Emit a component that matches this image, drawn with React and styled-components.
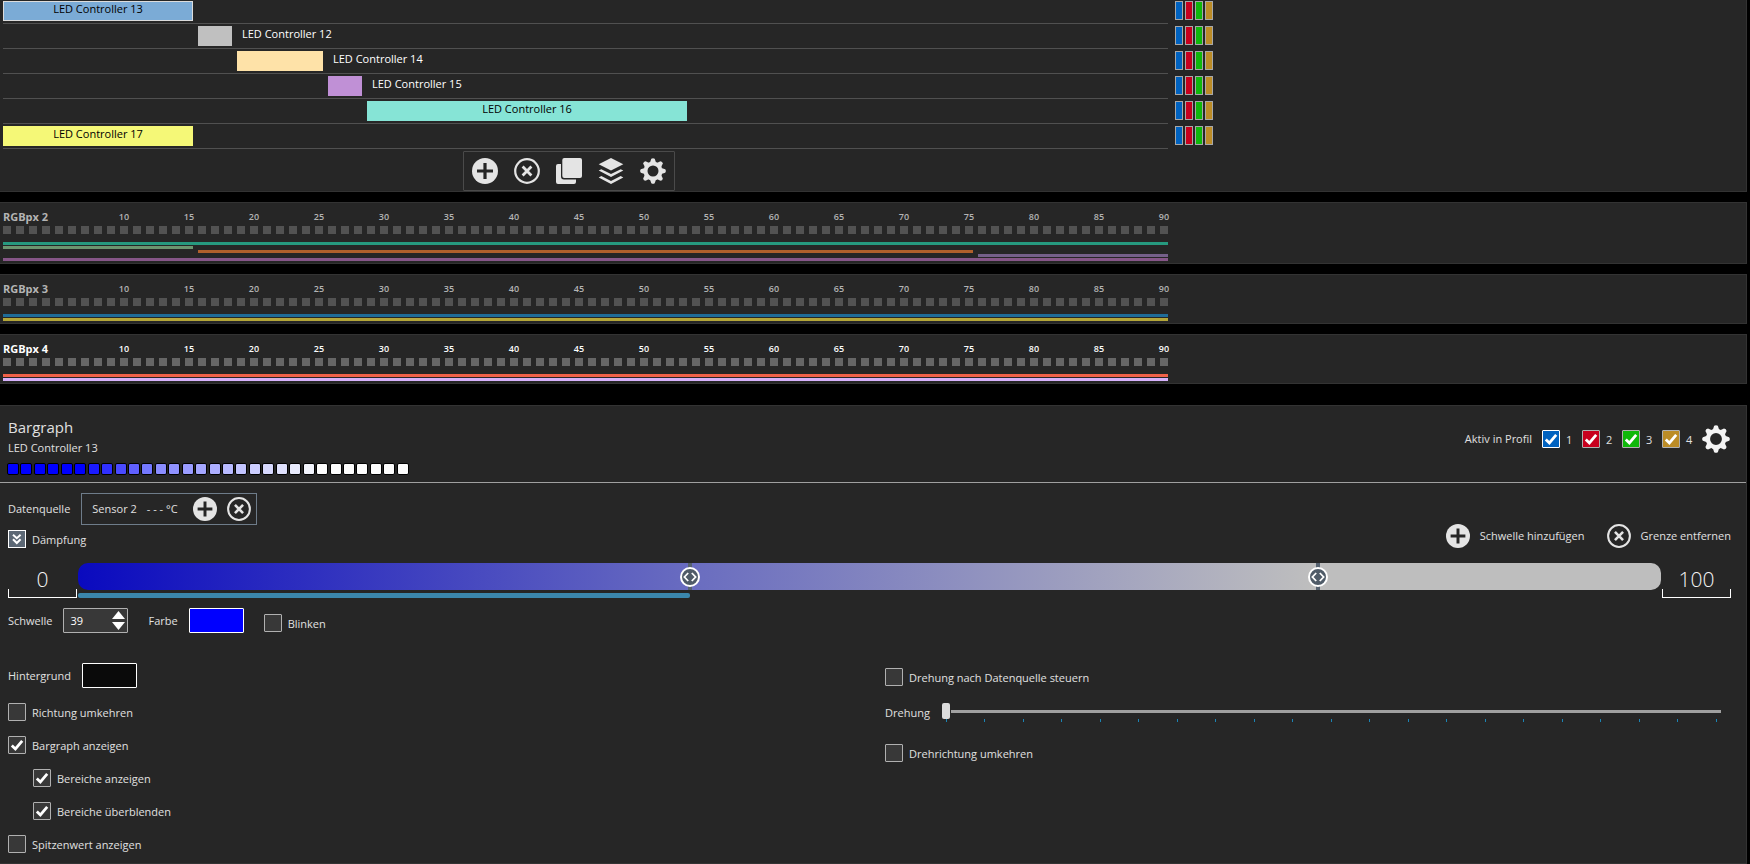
import React, { useState } from 'react';
import styled, { createGlobalStyle, css } from 'styled-components';

const PROFILES = ['#0062c0', '#c8001e', '#0fb80a', '#bc8c26'];

const CONTROLLERS = [
    { name: 'LED Controller 13', start: 1, count: 15, color: '#7babd6', selected: true },
    { name: 'LED Controller 12', start: 16, count: 3, color: '#c0c0c0', outside: true },
    { name: 'LED Controller 14', start: 19, count: 7, color: '#fee2a8', outside: true },
    { name: 'LED Controller 15', start: 26, count: 3, color: '#c090d6', outside: true },
    { name: 'LED Controller 16', start: 29, count: 25, color: '#86e4d6' },
    { name: 'LED Controller 17', start: 1, count: 15, color: '#f5f877' },
];

const STRIPS = [
    {
        name: 'RGBpx 2',
        lanes: [
            { start: 1, count: 90, color: '#26997f' },
            { start: 1, count: 15, color: '#6c9670' },
            { start: 16, count: 60, color: '#b0602c' },
            { start: 76, count: 15, color: '#75608a' },
            { start: 1, count: 90, color: '#865688' },
        ],
    },
    {
        name: 'RGBpx 3',
        lanes: [
            { start: 1, count: 90, color: '#1f6c98' },
            { start: 1, count: 90, color: '#b4a638' },
        ],
    },
    {
        name: 'RGBpx 4',
        active: true,
        lanes: [
            { start: 1, count: 90, color: '#f0624a' },
            { start: 1, count: 90, color: '#d6b2fc' },
        ],
    },
];

const PREVIEW = [
    '#0000ff', '#0000ff', '#0000ff', '#0000ff', '#0000ff', '#0000ff', '#1a1aff', '#3030ff', '#4a4aff', '#6060ff',
    '#7478ff', '#8a8cff', '#9092ff', '#9a9cff', '#a4a6ff', '#acaeff', '#b8baff', '#c2c4ff', '#ccceff', '#d6d8fd',
    '#dee0fc', '#e8eafc', '#f2f4fc', '#fcfcfc', '#fcfcfc', '#fcfcfc', '#fcfcfc', '#fcfcfc', '#fcfcfc', '#fcfcfc',
];

const range = (n) => Array.from({ length: n }, (_, i) => i);

const AddIcon = ({ size }) => (
    <svg width={size} height={size} viewBox="0 0 26 26">
        <circle cx="13" cy="13" r="13" fill="#e4e4e4" />
        <path d="M13 5v16M5 13h16" stroke="#262626" strokeWidth="3.2" />
    </svg>
);

const RemoveIcon = ({ size }) => (
    <svg width={size} height={size} viewBox="0 0 26 26" fill="none" stroke="#e4e4e4">
        <circle cx="13" cy="13" r="11.8" strokeWidth="2.2" />
        <path d="M8.6 8.6l8.8 8.8M17.4 8.6l-8.8 8.8" strokeWidth="2.8" />
    </svg>
);

const CopyIcon = () => (
    <svg width="26" height="26" viewBox="0 0 26 26" fill="#e4e4e4">
        <path d="M2 6h3v12.5a3 3 0 0 0 3 3h12V24a2 2 0 0 1-2 2H2a2 2 0 0 1-2-2V8a2 2 0 0 1 2-2z" />
        <rect x="6.3" y="0" width="19.7" height="20" rx="2" />
    </svg>
);

const LayersIcon = () => (
    <svg width="26" height="26" viewBox="0 0 26 26" fill="#e4e4e4">
        <path d="M13 0l12.3 6.2L13 12.4.7 6.2z" />
        <path d="M.7 12.6l2.6-1.3 9.7 4.8 9.7-4.8 2.6 1.3L13 19z" />
        <path d="M.7 19.4l2.6-1.3 9.7 4.9 9.7-4.9 2.6 1.3L13 26z" />
    </svg>
);

const GearIcon = ({ size, color = '#e4e4e4' }) => (
    <svg width={size} height={size} viewBox="0 0 26 26" fill={color}>
        <circle cx="13" cy="13" r="7.5" fill="none" stroke={color} strokeWidth="4" />
        {range(8).map((i) => (
            <path key={i} d="M10 4.6L11.3.8Q13-.5 14.7.8L16 4.6z" transform={`rotate(${i * 45} 13 13)`} />
        ))}
    </svg>
);

const Check = ({ label, color, strong, defaultChecked }) => (
    <CheckLabel>
        <CheckBox>
            <CheckInput type="checkbox" defaultChecked={defaultChecked} $color={color} $strong={strong} />
            <svg width="18" height="18" viewBox="0 0 18 18" fill="none" stroke="#fff" strokeWidth="2.8">
                <path d="M3.8 9.4l3.6 3.5 6.8-8" />
            </svg>
        </CheckBox>
        {label}
    </CheckLabel>
);

const ControllerRow = ({ data }) => {
    const { name, start, count, color, selected, outside } = data;

    return (
        <Row>
            <Track>
                <Bar $start={start} $count={count} $color={color} $selected={selected}>
                    {!outside && name}
                </Bar>
                {outside && <BarLabel $start={start + count}>{name}</BarLabel>}
            </Track>
            <Swatches>
                {PROFILES.map((profile) => <Swatch key={profile} $color={profile} />)}
            </Swatches>
        </Row>
    );
};

const Strip = ({ data }) => {
    const { name, active, lanes } = data;

    return (
        <StripPanel $active={active}>
            <Scale>
                <StripName>{name}</StripName>
                {range(17).map((i) => (
                    <ScaleMark key={i} $slot={(i + 2) * 5}>{(i + 2) * 5}</ScaleMark>
                ))}
            </Scale>
            <Slots>
                {range(90).map((i) => <Led key={i} $active={active} />)}
            </Slots>
            <Lanes>
                {lanes.map((lane, i) => (
                    <Lane key={i} $row={i + 1} $start={lane.start} $count={lane.count} $color={lane.color} />
                ))}
            </Lanes>
        </StripPanel>
    );
};

const Handle = ({ value, label }) => (
    <Marker style={{ left: `calc((100% - 14px) * ${value / 100})` }}>
        <Knob type="button" aria-label={label}>
            <svg width="20" height="20" viewBox="0 0 20 20" fill="none" stroke="#fff">
                <circle cx="10" cy="10" r="9" fill="#4f5b68" strokeWidth="2" />
                <path d="M8.2 6L4.4 10l3.8 4M11.8 6l3.8 4-3.8 4" strokeWidth="1.8" />
            </svg>
        </Knob>
    </Marker>
);

const App = () => {
    const [threshold, setThreshold] = useState(39);

    return (
        <Page>
            <GlobalStyle />
            <TopPanel>
                {CONTROLLERS.map((data) => <ControllerRow key={data.name} data={data} />)}
                <Toolbar>
                    <IconButton type="button" aria-label="Hinzufügen"><AddIcon size={26} /></IconButton>
                    <IconButton type="button" aria-label="Entfernen"><RemoveIcon size={26} /></IconButton>
                    <IconButton type="button" aria-label="Kopieren"><CopyIcon /></IconButton>
                    <IconButton type="button" aria-label="Ebenen"><LayersIcon /></IconButton>
                    <IconButton type="button" aria-label="Einstellungen"><GearIcon size={26} /></IconButton>
                </Toolbar>
            </TopPanel>
            {STRIPS.map((data) => <Strip key={data.name} data={data} />)}

            <Editor>
                <Header>
                    <div>
                        <Title>Bargraph</Title>
                        <Subtitle>LED Controller 13</Subtitle>
                        <Preview>
                            {PREVIEW.map((color, i) => <PreviewLed key={i} $color={color} />)}
                        </Preview>
                    </div>
                    <Profiles>
                        <Caption>Aktiv in Profil</Caption>
                        {PROFILES.map((color, i) => (
                            <ProfileItem key={color}>
                                <Check label={i + 1} color={color} strong={i === 0} defaultChecked />
                            </ProfileItem>
                        ))}
                        <IconButton type="button" aria-label="Profil-Einstellungen">
                            <GearIcon size={28} color="#f4f4f4" />
                        </IconButton>
                    </Profiles>
                </Header>

                <Body>
                    <SourceArea>
                        <div>
                            <SourceRow>
                                <Caption>Datenquelle</Caption>
                                <SourceBox>
                                    <Caption>Sensor 2</Caption>
                                    <Reading>- - - °C</Reading>
                                    <IconButton type="button" aria-label="Quelle wählen"><AddIcon size={24} /></IconButton>
                                    <IconButton type="button" aria-label="Quelle entfernen"><RemoveIcon size={24} /></IconButton>
                                </SourceBox>
                            </SourceRow>
                            <Expander type="button">
                                <ExpandIcon>
                                    <svg width="16" height="16" viewBox="0 0 16 16" fill="none" stroke="#fff" strokeWidth="2">
                                        <path d="M4 3.8l3.8 3.4 3.8-3.4M4 8.2l3.8 3.8 3.8-3.8" />
                                    </svg>
                                </ExpandIcon>
                                Dämpfung
                            </Expander>
                        </div>
                        <Actions>
                            <TextButton type="button"><AddIcon size={24} />Schwelle hinzufügen</TextButton>
                            <TextButton type="button"><RemoveIcon size={24} />Grenze entfernen</TextButton>
                        </Actions>
                    </SourceArea>

                    <RangeRow>
                        <Limit type="text" aria-label="Minimum" defaultValue="0" />
                        <RangeTrack>
                            <GradientBar>
                                <Handle value={39} label="Schwelle 1" />
                                <Handle value={79} label="Schwelle 2" />
                            </GradientBar>
                            <ActiveRange style={{ width: `calc((100% - 14px) * ${threshold / 100})` }} />
                        </RangeTrack>
                        <Limit type="text" aria-label="Maximum" defaultValue="100" />
                    </RangeRow>

                    <Controls>
                        <Field htmlFor="threshold">Schwelle</Field>
                        <Spinner>
                            <SpinInput
                                id="threshold"
                                type="number"
                                value={threshold}
                                onChange={(event) => setThreshold(Number(event.target.value))}
                            />
                            <SpinButtons>
                                <IconButton type="button" aria-label="Erhöhen" onClick={() => setThreshold(threshold + 1)}>
                                    <svg width="13" height="8" viewBox="0 0 13 8" fill="#fff"><path d="M6.5 0L13 8H0z" /></svg>
                                </IconButton>
                                <IconButton type="button" aria-label="Verringern" onClick={() => setThreshold(threshold - 1)}>
                                    <svg width="13" height="8" viewBox="0 0 13 8" fill="#fff"><path d="M6.5 8L13 0H0z" /></svg>
                                </IconButton>
                            </SpinButtons>
                        </Spinner>
                        <Field htmlFor="color" $spaced>Farbe</Field>
                        <ColorInput id="color" type="color" defaultValue="#0000ff" />
                        <Blink><Check label="Blinken" /></Blink>
                    </Controls>

                    <Options>
                        <LeftOptions>
                            <ColorField>
                                <Field htmlFor="background">Hintergrund</Field>
                                <ColorInput id="background" type="color" defaultValue="#0a0a0a" />
                            </ColorField>
                            <Check label="Richtung umkehren" />
                            <Check label="Bargraph anzeigen" defaultChecked />
                            <Nested>
                                <Check label="Bereiche anzeigen" defaultChecked />
                                <Check label="Bereiche überblenden" defaultChecked />
                            </Nested>
                            <Check label="Spitzenwert anzeigen" />
                        </LeftOptions>
                        <RightOptions>
                            <Check label="Drehung nach Datenquelle steuern" />
                            <Rotation>
                                <Field htmlFor="rotation">Drehung</Field>
                                <div>
                                    <Slider id="rotation" type="range" min="0" max="20" defaultValue="0" />
                                    <Ticks>
                                        {range(21).map((i) => <Tick key={i} />)}
                                    </Ticks>
                                </div>
                            </Rotation>
                            <Check label="Drehrichtung umkehren" />
                        </RightOptions>
                    </Options>
                </Body>
            </Editor>
        </Page>
    );
};

const GlobalStyle = createGlobalStyle`
    *, *::before, *::after {
        box-sizing: border-box;
    }
    body {
        margin: 0;
        background: #000;
        color: #e0e0e0;
        font: 11px/18px 'Open Sans', 'Noto Sans', sans-serif;
    }
    button, input {
        margin: 0;
        padding: 0;
        border: 0;
        background: none;
        color: inherit;
        font: inherit;
    }
    svg {
        display: block;
    }
`;

const Page = styled.div`
    padding-right: 3px;
    overflow: hidden;
`;

const panel = css`
    background: #262626;
    border: 1px solid #333;
    border-left: 0;
`;

/* 90 LED slots, 8px each with a 5px gap */
const slotGrid = css`
    display: grid;
    grid-template-columns: repeat(90, 8px);
    column-gap: 5px;
`;

const TopPanel = styled.section`
    ${panel}
    border-top: 0;
    margin-top: -1px;
    padding-left: 3px;
`;

const Row = styled.div`
    display: flex;
    gap: 7px;
    height: 25px;
`;

const Track = styled.div`
    ${slotGrid}
    border-bottom: 1px solid #505050;
    padding: 2px 0;
    line-height: 15px;
`;

const Bar = styled.div`
    grid-row: 1;
    grid-column: ${(props) => props.$start} / span ${(props) => props.$count};
    height: 20px;
    background: ${(props) => props.$color};
    box-shadow: ${(props) => props.$selected ? 'inset 0 0 0 1px #dcdcdc' : 'none'};
    color: #000;
    text-align: center;
`;

const BarLabel = styled.div`
    grid-row: 1;
    grid-column: ${(props) => props.$start} / -1;
    padding-left: 5px;
    color: #fff;
`;

const Swatches = styled.div`
    display: flex;
    gap: 2px;
    padding-top: 2px;
`;

const Swatch = styled.span`
    width: 8px;
    height: 19px;
    border: 1px solid #a8a8a8;
    background: ${(props) => props.$color};
`;

const Toolbar = styled.div`
    display: flex;
    align-items: center;
    gap: 16px;
    width: fit-content;
    height: 40px;
    margin: 2px 0 0 460px;
    padding: 0 8px;
    border: 1px solid #4a4a4a;
    border-radius: 1px;
`;

const IconButton = styled.button`
    cursor: pointer;
`;

const StripPanel = styled.section`
    ${panel}
    margin-top: 10px;
    padding: 5px 0 1px 3px;
    color: ${(props) => props.$active ? '#fff' : '#b4b4b4'};
    font-weight: bold;
`;

const Scale = styled.div`
    ${slotGrid}
    height: 18px;
    line-height: 17px;
`;

const StripName = styled.div`
    grid-row: 1;
    grid-column: 1 / span 7;
    white-space: nowrap;
`;

const ScaleMark = styled.div`
    grid-row: 1;
    grid-column: ${(props) => props.$slot};
    display: flex;
    justify-content: center;
    font-size: 9px;
    font-weight: 600;
    line-height: 18px;
`;

const Slots = styled.div`
    ${slotGrid}
`;

const Led = styled.span`
    height: 8px;
    background: ${(props) => props.$active ? '#666' : '#525252'};
`;

const Lanes = styled.div`
    ${slotGrid}
    grid-auto-rows: 3px;
    row-gap: 1px;
    padding: 8px 0 1px;
`;

const Lane = styled.span`
    grid-row: ${(props) => props.$row};
    grid-column: ${(props) => props.$start} / span ${(props) => props.$count};
    background: ${(props) => props.$color};
`;

const Editor = styled.section`
    ${panel}
    margin-top: 21px;
`;

const Header = styled.header`
    display: flex;
    justify-content: space-between;
    padding: 10px 16px 7px 8px;
    border-bottom: 1px solid #a0a0a0;
`;

const Title = styled.h1`
    margin: 0;
    font-size: 15px;
    line-height: 22px;
    font-weight: normal;
`;

const Subtitle = styled.div`
    line-height: 19px;
`;

const Preview = styled.div`
    display: flex;
    justify-content: space-between;
    width: 402px;
    margin: 6px 0 0 -1px;
`;

const PreviewLed = styled.span`
    width: 12px;
    height: 12px;
    border: 1px solid #000;
    border-radius: 2px;
    background: ${(props) => props.$color};
`;

const Profiles = styled.div`
    display: flex;
    align-items: center;
    gap: 10px;
    height: 28px;
    margin-top: 9px;
`;

const ProfileItem = styled.div`
    width: 30px;
`;

const Caption = styled.span`
    line-height: 20px;
`;

const CheckLabel = styled.label`
    display: flex;
    gap: 6px;
    width: fit-content;
    height: 18px;
    line-height: 20px;
    white-space: nowrap;
    cursor: pointer;
`;

const CheckBox = styled.span`
    display: grid;
    > * {
        grid-area: 1 / 1;
    }
    svg {
        pointer-events: none;
    }
    input:not(:checked) + svg {
        visibility: hidden;
    }
`;

const CheckInput = styled.input`
    appearance: none;
    width: 18px;
    height: 18px;
    border: 1px solid ${(props) => props.$strong ? '#fff' : '#b0b0b0'};
    border-radius: 1px;
    background: ${(props) => props.$color || '#383838'};
`;

const Body = styled.div`
    padding: 10px 15px 10px 8px;
`;

const SourceArea = styled.div`
    display: flex;
    justify-content: space-between;
    align-items: flex-end;
`;

const SourceRow = styled.div`
    display: flex;
    align-items: center;
    gap: 11px;
    margin-bottom: 5px;
`;

const SourceBox = styled.div`
    display: flex;
    align-items: center;
    gap: 10px;
    height: 32px;
    padding: 0 5px 0 10px;
    border: 1px solid #6e7c8a;
`;

const Reading = styled(Caption)`
    min-width: 36px;
`;

const Expander = styled.button`
    display: flex;
    gap: 6px;
    height: 18px;
    line-height: 20px;
    cursor: pointer;
`;

const ExpandIcon = styled.span`
    border: 1px solid #fff;
    background: #5c6875;
`;

const Actions = styled.div`
    display: flex;
    gap: 22px;
`;

const TextButton = styled.button`
    display: flex;
    align-items: center;
    gap: 10px;
    cursor: pointer;
`;

const RangeRow = styled.div`
    display: flex;
    gap: 1px;
    margin-top: 15px;
`;

const Limit = styled.input`
    width: 69px;
    height: 35px;
    padding-bottom: 3px;
    background:
        linear-gradient(#fff, #fff) left bottom / 1px 8px no-repeat,
        linear-gradient(#fff, #fff) right bottom / 1px 8px no-repeat;
    border-bottom: 1px solid #fff;
    color: #f4f4f4;
    font-size: 21px;
    font-weight: 300;
    text-align: center;
`;

const RangeTrack = styled.div`
    flex: 1;
`;

const GradientBar = styled.div`
    position: relative;
    height: 27px;
    border-radius: 10px;
    background: linear-gradient(to right, #0a0abf, #6a6dc0 39%, #bebebe 78%);
`;

const Marker = styled.span`
    position: absolute;
    top: 0;
    display: flex;
    align-items: center;
    justify-content: center;
    width: 4px;
    height: 27px;
    margin-left: -2px;
    background: #566270;
`;

const Knob = styled.button`
    flex: none;
    cursor: ew-resize;
`;

const ActiveRange = styled.div`
    height: 5px;
    margin-top: 3px;
    border-radius: 2px;
    background: #3b87ad;
`;

const Controls = styled.div`
    display: flex;
    align-items: center;
    gap: 10px;
    margin-top: 10px;
`;

const Field = styled.label`
    margin-left: ${(props) => props.$spaced ? '10px' : '0'};
    padding-right: 1px;
`;

const Spinner = styled.div`
    display: flex;
    align-items: center;
    width: 65px;
    height: 25px;
    padding: 0 2px 0 6px;
    border: 1px solid #b0b0b0;
    border-radius: 1px;
    background: #383838;
    color: #fff;
`;

const SpinInput = styled.input`
    flex: 1;
    min-width: 0;
    appearance: textfield;
    &::-webkit-inner-spin-button {
        display: none;
    }
`;

const SpinButtons = styled.div`
    display: grid;
    gap: 3px;
`;

const ColorInput = styled.input`
    appearance: none;
    width: 55px;
    height: 25px;
    border: 1px solid #fff;
    border-radius: 1px;
    &::-webkit-color-swatch-wrapper {
        padding: 0;
    }
    &::-webkit-color-swatch {
        border: 0;
    }
`;

const Blink = styled.div`
    align-self: flex-end;
    margin: 0 0 1px 10px;
`;

const Options = styled.div`
    display: grid;
    grid-template-columns: 1fr 1fr;
    gap: 31px;
    margin-top: 30px;
`;

const LeftOptions = styled.div`
    display: grid;
    align-content: start;
    gap: 15px;
`;

const ColorField = styled.div`
    display: flex;
    align-items: center;
    gap: 10px;
`;

const Nested = styled.div`
    display: grid;
    gap: 15px;
    padding-left: 25px;
`;

const RightOptions = styled.div`
    display: grid;
    align-content: start;
    gap: 17px;
    padding-top: 5px;
`;

const Rotation = styled.div`
    display: grid;
    grid-template-columns: auto 1fr;
    gap: 11px;
    height: 24px;
    padding-right: 10px;
    line-height: 20px;
`;

const Slider = styled.input`
    appearance: none;
    display: block;
    width: 100%;
    height: 16px;
    background: linear-gradient(#a0a0a0, #a0a0a0) center / 100% 3px no-repeat;
    &::-webkit-slider-thumb {
        appearance: none;
        width: 8px;
        height: 16px;
        border-radius: 2px;
        background: #dcdcdc;
        box-shadow: 1px 0 #262626;
    }
`;

const Ticks = styled.div`
    display: flex;
    justify-content: space-between;
    padding: 0 4px;
`;

const Tick = styled.span`
    width: 1px;
    height: 3px;
    background: #1c84b4;
`;

export default App;
